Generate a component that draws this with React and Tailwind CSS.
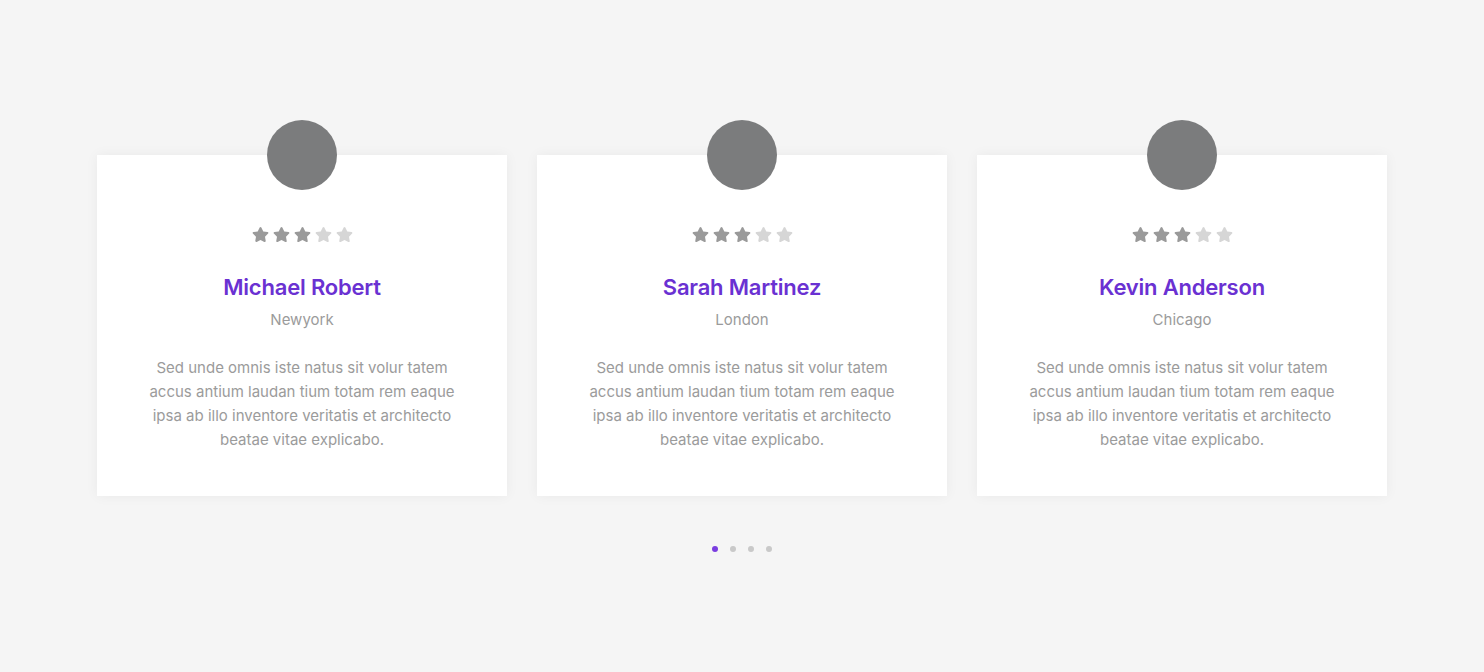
import { FaStar } from 'react-icons/fa'

const PEOPLE = [
  { name: 'Michael Robert', city: 'Newyork' },
  { name: 'Sarah Martinez', city: 'London' },
  { name: 'Kevin Anderson', city: 'Chicago' },
]

function Stars({ value }) {
  return (
    <div className="flex justify-center gap-[4px] h-[17px]">
      {[0, 1, 2, 3, 4].map(i => (
        <FaStar key={i} size={17} className={i < value ? 'text-[#9a9a9a]' : 'text-[#d6d6d6]'} />
      ))}
    </div>
  )
}

function Card({ name, city }) {
  return (
    <div className="relative bg-white shadow-[0_0_12px_rgba(0,0,0,0.05)] pt-[71px] pb-[44px] text-center">
      <div className="absolute left-1/2 -translate-x-1/2 top-[-35px] w-[70px] h-[70px] rounded-full bg-[#7b7c7d]" />
      <Stars value={3} />
      <h3 className="mt-[29px] text-[22px] leading-[30px] font-semibold text-[#6a31d2] tracking-[-0.2px]">{name}</h3>
      <div className="mt-[6px] text-[15px] leading-[24px] text-[#9b9b9b]">{city}</div>
      <p className="mt-[24px] mx-auto w-[320px] text-[15px] leading-[24px] text-[#9b9b9b]">
        Sed unde omnis iste natus sit volur tatem accus antium laudan tium totam rem eaque ipsa ab illo inventore veritatis et architecto beatae vitae explicabo.
      </p>
    </div>
  )
}

export default function App() {
  return (
    <div className="min-h-[672px] bg-[#f5f5f5] pt-[155px] font-['Inter','Noto_Sans',sans-serif]">
      <div className="mx-auto w-[1290px] grid grid-cols-3 gap-[30px]">
        {PEOPLE.map(p => <Card key={p.name} {...p} />)}
      </div>
      <div className="flex justify-center gap-[12px] mt-[50px]">
        {[0, 1, 2, 3].map(i => (
          <span key={i} className={`w-[6px] h-[6px] rounded-full ${i === 0 ? 'bg-[#7a3de0]' : 'bg-[#c9c9c9]'}`} />
        ))}
      </div>
    </div>
  )
}
